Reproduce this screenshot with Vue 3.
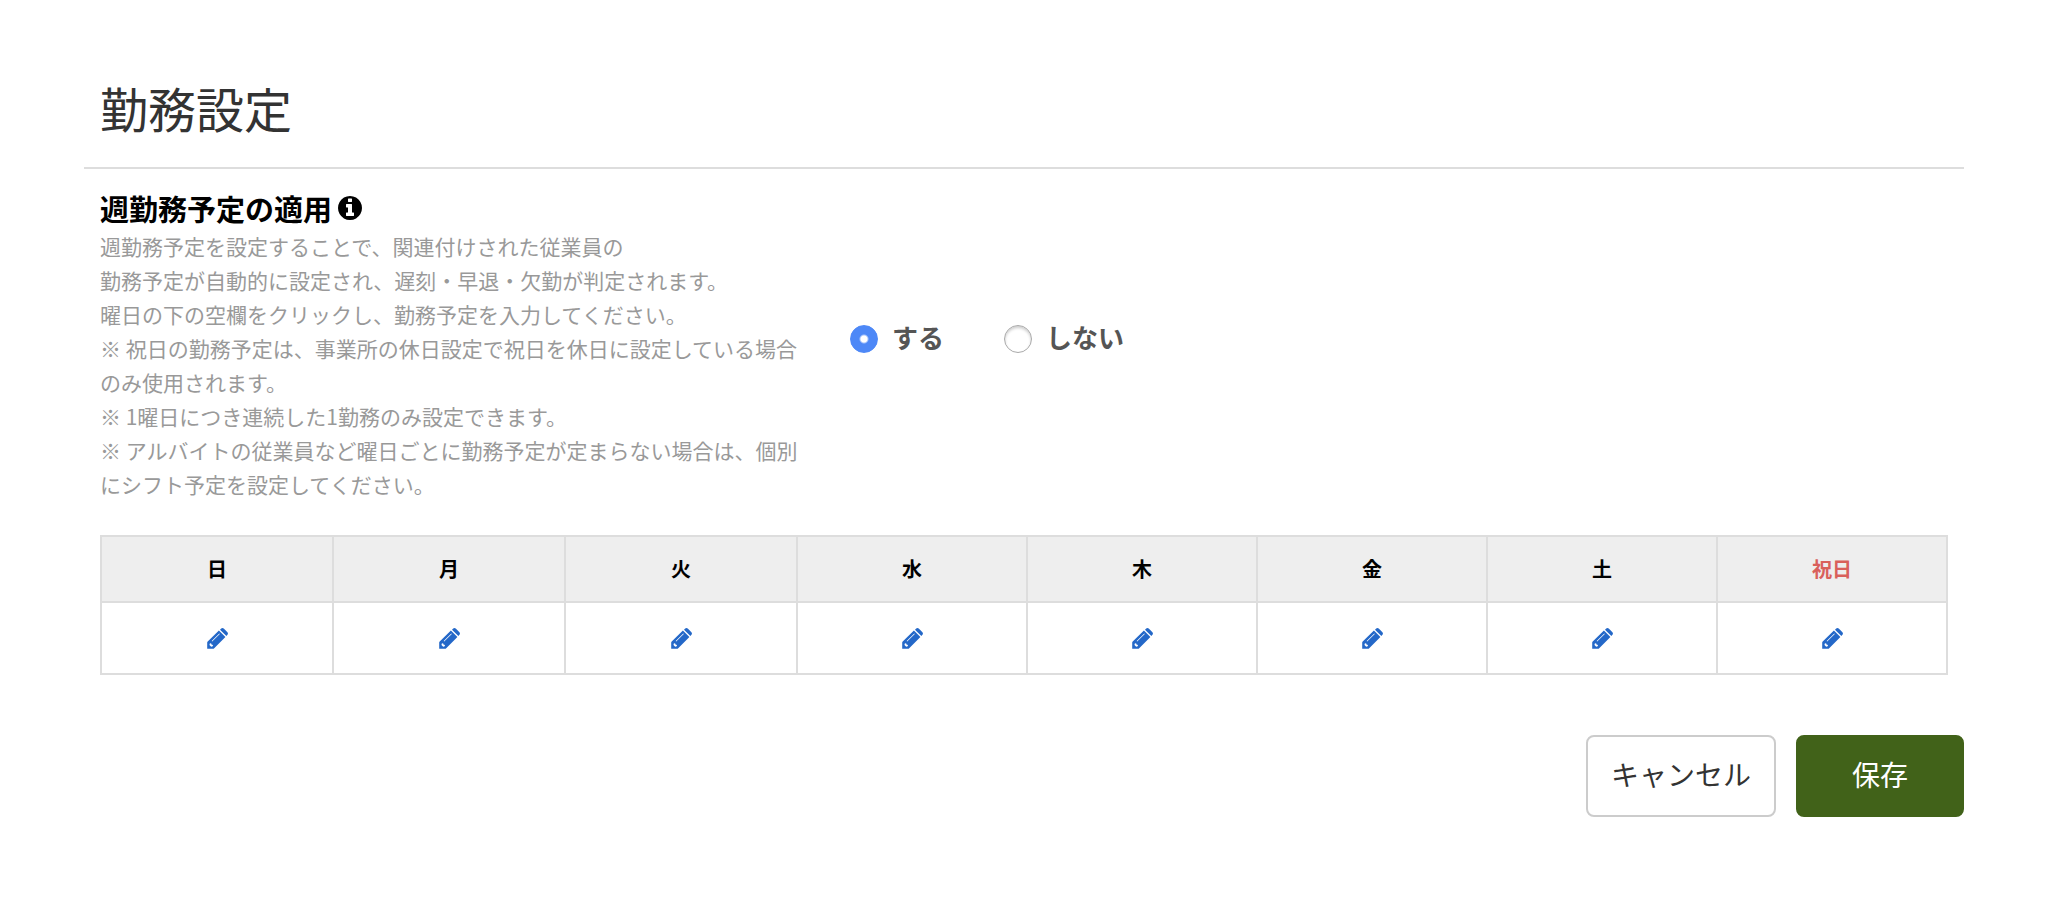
<script setup>
import { ref } from 'vue'

const applied = ref('yes')
const options = [
  { value: 'yes', label: 'する' },
  { value: 'no', label: 'しない' },
]
const days = ['日', '月', '火', '水', '木', '金', '土', '祝日']
</script>

<template>
  <main class="page">
    <h1 class="title">勤務設定</h1>

    <form @submit.prevent>
      <section class="setting">
        <div class="about">
          <h2 id="weekly-label" class="heading">
            <span>週勤務予定の適用</span>
            <svg class="info" viewBox="128 128 1536 1536" aria-hidden="true">
              <path d="M1152 1376v-160q0-14-9-23t-23-9h-96v-512q0-14-9-23t-23-9h-320q-14 0-23 9t-9 23v160q0 14 9 23t23 9h96v320h-96q-14 0-23 9t-9 23v160q0 14 9 23t23 9h448q14 0 23-9t9-23zm-128-896v-160q0-14-9-23t-23-9h-192q-14 0-23 9t-9 23v160q0 14 9 23t23 9h192q14 0 23-9t9-23zm640 416q0 209-103 385.500t-279.500 279.500-385.500 103-385.500-103-279.500-279.500-103-385.500 103-385.500 279.500-279.500 385.500-103 385.500 103 279.500 279.500 103 385.500z" />
            </svg>
          </h2>
          <p class="description">
            週勤務予定を設定することで、関連付けされた従業員の<br />
            勤務予定が自動的に設定され、遅刻・早退・欠勤が判定されます。<br />
            曜日の下の空欄をクリックし、勤務予定を入力してください。<br />
            ※ 祝日の勤務予定は、事業所の休日設定で祝日を休日に設定している場合のみ使用されます。<br />
            ※ 1曜日につき連続した1勤務のみ設定できます。<br />
            ※ アルバイトの従業員など曜日ごとに勤務予定が定まらない場合は、個別にシフト予定を設定してください。
          </p>
        </div>
        <div class="choices" role="radiogroup" aria-labelledby="weekly-label">
          <label v-for="o in options" :key="o.value" class="choice">
            <input v-model="applied" class="radio" type="radio" name="applied" :value="o.value" />
            <span class="choice-text">{{ o.label }}</span>
          </label>
        </div>
      </section>

      <div class="schedule">
        <table class="week">
          <thead>
            <tr>
              <th v-for="d in days" :key="d" scope="col" :class="{ holiday: d === '祝日' }">{{ d }}</th>
            </tr>
          </thead>
          <tbody>
            <tr>
              <td v-for="d in days" :key="d">
                <button class="edit" type="button" :aria-label="d + 'の勤務予定を編集'">
                  <svg class="pencil" viewBox="0 0 21 21" aria-hidden="true">
                    <path fill-rule="evenodd" d="M0.2 14.6Q0.200 14 .7 13.500L11.900 2.600 18.400 9 7.200 20.300Q6.700 20.800 6 20.800H.2ZM2.800 15.600 2.500 17 4.200 18.700 5.700 18.200 6 16.900 4.500 16.500 4.100 15.200ZM4.700 13 5.200 13.500 12.800 5.900 12.300 5.400Z" />
                    <path d="M13 1.700 14.200.6Q15.600-.5 17 .8L20.200 4Q21.600 5.400 20.400 6.800L19.400 8Z" />
                  </svg>
                </button>
              </td>
            </tr>
          </tbody>
        </table>
      </div>

      <div class="actions">
        <button class="button cancel" type="button">キャンセル</button>
        <button class="button save" type="submit">保存</button>
      </div>
    </form>
  </main>
</template>

<style>
body {
  background: #fff;
}
</style>

<style scoped>
.page {
  padding: 72px 84px;
  color: #333;
  font-family: 'Noto Sans CJK JP', 'Liberation Sans', sans-serif;
}

.title {
  margin: 0;
  padding: 0 16px 25px;
  border-bottom: 2px solid #ddd;
  font-size: 48px;
  font-weight: 400;
  line-height: 70px;
}

.setting {
  display: flex;
  align-items: center;
  padding-top: 18px;
}

.about {
  box-sizing: border-box;
  flex: 0 0 40%;
  padding: 0 16px;
}

.heading {
  display: flex;
  align-items: center;
  gap: 6px;
  margin: 0;
  color: #000;
  font-size: 29px;
  font-weight: 700;
  line-height: 42px;
}

.info {
  width: 24px;
  height: 24px;
}

.description {
  max-width: 34em;
  margin: 0;
  color: #999;
  font-size: 21px;
  line-height: 34px;
}

.choices {
  display: flex;
  gap: 60px;
  padding: 0 14px 10px;
}

.choice {
  display: flex;
  align-items: center;
  gap: 14px;
  color: #555;
  font-size: 26px;
  font-weight: 700;
  line-height: 40px;
}

.choice-text {
  padding-bottom: 4px;
}

.radio {
  box-sizing: border-box;
  width: 28px;
  height: 28px;
  margin: 0;
  appearance: none;
  border: 1px solid #aaa;
  border-radius: 50%;
  background: #fff;
  box-shadow: inset 0 2px 3px rgba(0, 0, 0, 0.2);
}

.radio:checked {
  border-color: #4d88f7;
  background: radial-gradient(circle, #fff 0 3px, #4d88f7 5px);
  box-shadow: none;
}

.schedule {
  padding: 34px 16px 0;
}

.week {
  width: 100%;
  border-collapse: collapse;
  table-layout: fixed;
}

.week th,
.week td {
  padding: 0;
  border: 2px solid #ddd;
  text-align: center;
}

.week th {
  height: 62px;
  padding-bottom: 2px;
  background: #eee;
  color: #000;
  font-size: 20px;
  font-weight: 700;
}

.week th:nth-child(-n + 3) {
  width: 230px;
}

.week .holiday {
  color: #d9605b;
}

.week td {
  height: 70px;
}

.edit {
  display: block;
  width: 100%;
  padding: 24px 0;
  border: 0;
  background: none;
  cursor: pointer;
}

.pencil {
  display: block;
  width: 21px;
  height: 21px;
  margin: 0 auto;
  fill: #2468c8;
}

.actions {
  display: flex;
  justify-content: flex-end;
  gap: 20px;
  margin-top: 60px;
}

.button {
  padding: 16px 23px 20px;
  border: 2px solid #ccc;
  border-radius: 8px;
  background: #fff;
  color: #333;
  font-family: inherit;
  font-size: 28px;
  line-height: 42px;
  cursor: pointer;
}

.save {
  padding: 16px 54px 20px;
  border-color: #416219;
  background: #416219;
  color: #fff;
}
</style>
